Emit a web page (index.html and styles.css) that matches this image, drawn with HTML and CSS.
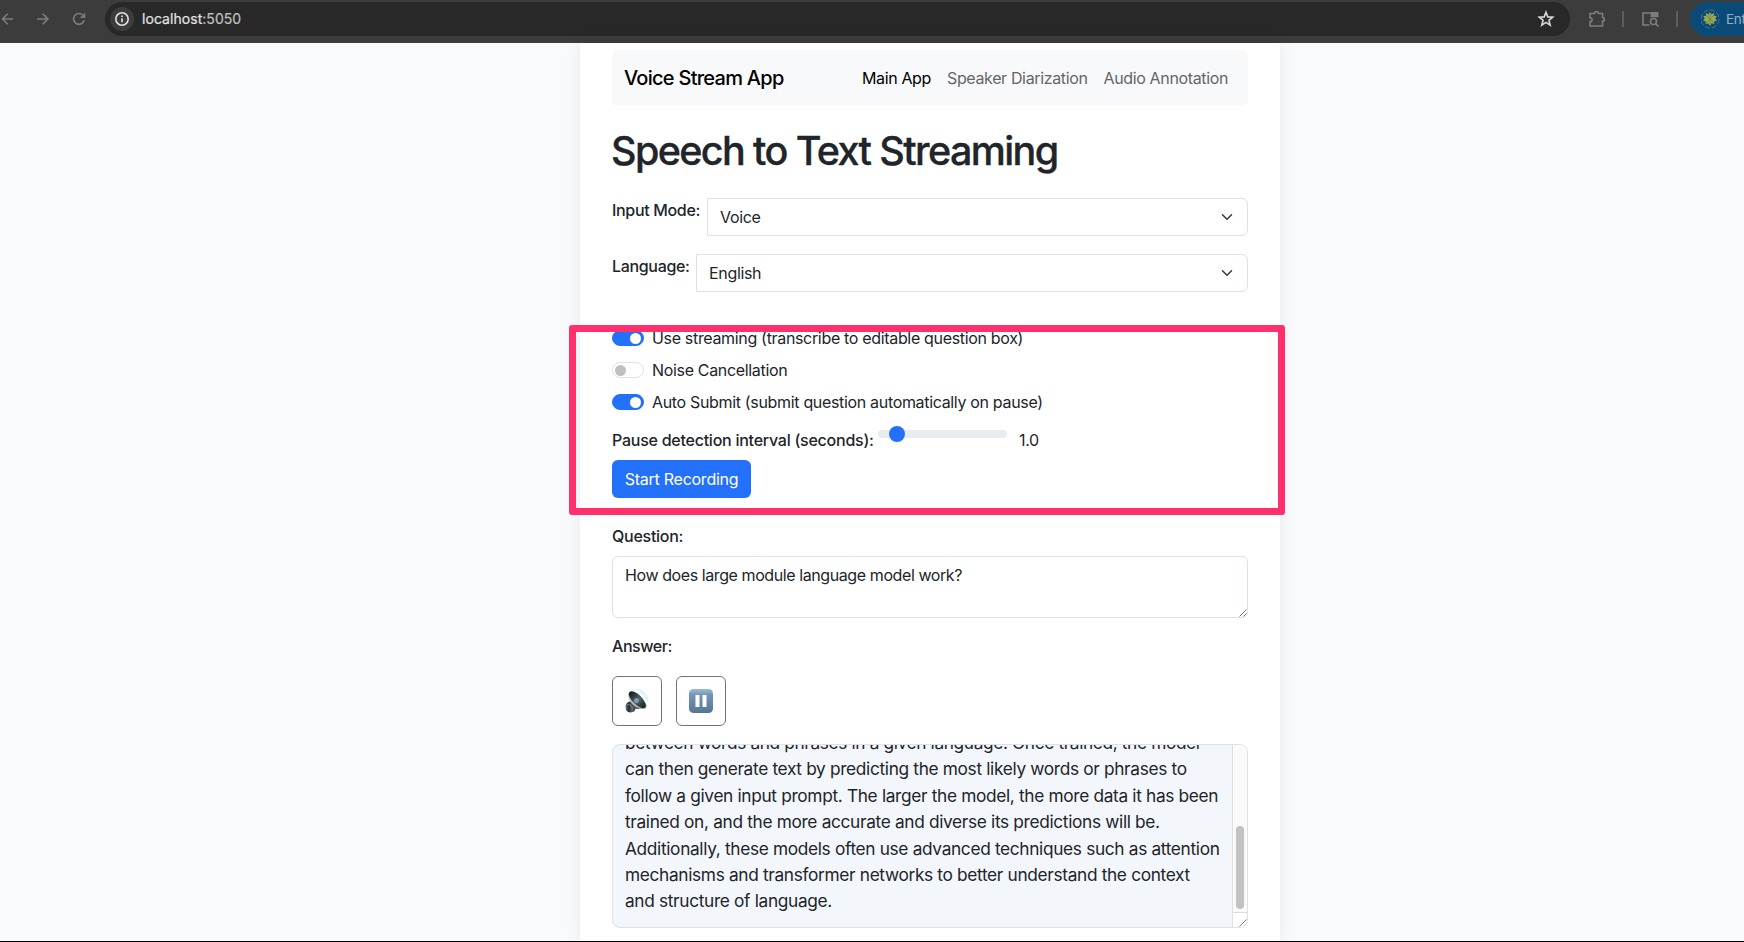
FILE: index.html
```
<!DOCTYPE html>
<html lang="en">
<head>
<meta charset="utf-8">
<title>Voice Stream App</title>
<link rel="stylesheet" href="styles.css">
</head>
<body>
<header class="toolbar">
  <div class="nav-icons">
    <svg width="16" height="16" viewBox="0 0 16 16"><path d="M13 8H2.500M7.700 2.800 2.500 8l5.200 5.200"/></svg>
    <svg width="16" height="16" viewBox="0 0 16 16"><path d="M2 8h10.800M7.700 2.800 12.900 8l-5.200 5.200"/></svg>
    <svg width="16" height="16" viewBox="0 0 16 16"><path d="M13.200 9.300A5.400 5.400 0 1 1 11.900 4.200L13.500 6M13.500 2.300V6.300H9.300"/></svg>
  </div>
  <div class="address">
    <span class="info"><svg width="16" height="16" viewBox="0 0 16 16"><circle cx="8" cy="8" r="6.200"/><path d="M8 7.200v4M8 4.500v1.500"/></svg></span>
    <span class="url">localhost<span class="port">:5050</span></span>
    <svg class="star" width="18" height="18" viewBox="0 0 18 18"><path d="m9 2.300 1.800 4.600 4.900.3-3.800 3.100 1.300 4.800L9 12.400l-4.200 2.700 1.300-4.800-3.800-3.100 4.900-.3z"/></svg>
  </div>
  <svg class="puzzle" width="18" height="18" viewBox="0 0 18 18"><path d="M2 3.500h4.500C6.500 1 10.500 1 10.500 3.500H14.500v4C17 7.500 17 11.300 14.500 11.300V16H2v-4.200c2.800 0 2.800-4 0-4z"/></svg>
  <span class="divider"></span>
  <svg class="tabsearch" width="18" height="18" viewBox="0 0 18 18"><path d="M8.500 15H2V3h14.500v4"/><path class="tab" d="M9.500 2.200h7.800v5H9.500z"/><circle cx="12.500" cy="11.500" r="3"/><path d="m14.700 13.700 2.800 2.800"/></svg>
  <span class="divider second"></span>
  <div class="profile">
    <svg width="20" height="20" viewBox="0 0 20 20"><circle class="ring" cx="10" cy="10" r="9"/><path class="leaf" d="m10 3 1.500 2.500L14 4l.2 2.700 2.500.6-1.400 2.200 1.700 2-2.600.7-.2 2.700-2.500-.7L10 17l-1.700-2.600-2.600.7-.2-2.800-2.600-.8 1.800-2L3.200 7.300l2.600-.5L6 4l2.500 1.500z"/><path class="vein" d="m6 6 8 8M14 6l-8 8M10 5v10"/></svg>
    <span>Ent</span>
  </div>
</header>
<main class="card">
  <nav class="navbar">
    <span class="brand">Voice Stream App</span>
    <div class="links"><span class="active">Main App</span><span>Speaker Diarization</span><span>Audio Annotation</span></div>
  </nav>
  <h1>Speech to Text Streaming</h1>
  <div class="field"><label class="label t-mode">Input Mode:</label><div class="select"><span>Voice</span><svg width="12" height="12" viewBox="0 0 16 16"><path d="m2 5 6 6 6-6"/></svg></div></div>
  <div class="field"><label class="label t-lang">Language:</label><div class="select"><span>English</span><svg width="12" height="12" viewBox="0 0 16 16"><path d="m2 5 6 6 6-6"/></svg></div></div>
  <section class="options">
    <div class="check"><i class="switch on"></i><span>Use streaming (transcribe to editable question box)</span></div>
    <div class="check"><i class="switch"></i><span>Noise Cancellation</span></div>
    <div class="check"><i class="switch on"></i><span>Auto Submit (submit question automatically on pause)</span></div>
    <div class="pause"><span class="label t-pause">Pause detection interval (seconds):</span><div class="range"><i></i></div><span class="value">1.0</span></div>
    <button class="record">Start Recording</button>
    <div class="highlight"></div>
  </section>
  <div class="label question-label">Question:</div>
  <div class="question">How does large module language model work?<svg class="grip" width="8" height="8" viewBox="0 0 8 8"><path d="M.5 7.500l7-7M4.500 7.500l3-3"/></svg></div>
  <div class="label answer-label">Answer:</div>
  <div class="actions">
    <button><svg width="26" height="26" viewBox="0 0 26 26">
      <defs>
        <linearGradient id="magnet"><stop stop-color="#777b7e"/><stop offset=".3" stop-color="#25282a"/><stop offset=".6" stop-color="#62676b"/><stop offset="1" stop-color="#17191a"/></linearGradient>
        <linearGradient id="cone"><stop stop-color="#111415"/><stop offset=".55" stop-color="#4d6970"/><stop offset="1" stop-color="#16191b"/></linearGradient>
      </defs>
      <path fill="url(#magnet)" d="M1.500 18c.5-4 4-5 7-4.500l4 4-2 5.500c-2.500 2.500-7.500 1.500-8.500-1z"/>
      <path fill="#b2b7ba" d="M4.500 5c-1 4 1 8 4.500 12 3 3.500 9 5 12.500 3.500 2-1 1.500-3 .5-5z"/>
      <path fill="#4e5356" d="M7 15c2 3 6 5 10 5.500l-5 .5c-3-1-5-3-5-6z"/>
      <ellipse cx="13.300" cy="11.700" rx="11" ry="4.800" transform="rotate(45 13.300 11.700)" fill="url(#cone)"/>
      <circle cx="12.500" cy="12.500" r="2.500" fill="#8399a5"/>
      <path fill="none" stroke="#b9eef3" d="M12.500 1.500c6 0 11 5 11.500 12M16 4c3 1.500 5 4 6 7"/>
      <path fill="none" stroke="#8d9295" stroke-width=".8" d="M3 17c2.500-1 5 .5 5.500 4"/>
    </svg></button>
    <button><svg width="26" height="26" viewBox="0 0 26 26"><defs><linearGradient id="pg" x2="0" y2="1"><stop stop-color="#9dbbd4"/><stop offset=".25" stop-color="#7396b5"/><stop offset="1" stop-color="#58768f"/></linearGradient></defs><rect x="1" y="1" width="24" height="24" rx="4.500" fill="url(#pg)"/><path fill="#fff" d="M7.500 7h4v12h-4zM14.500 7h4v12h-4z"/></svg></button>
  </div>
  <div class="answer">
    <div class="text">
      <p class="first">between words and phrases in a given language. Once trained, the model</p>
      <p>can then generate text by predicting the most likely words or phrases to</p>
      <p>follow a given input prompt. The larger the model, the more data it has been</p>
      <p>trained on, and the more accurate and diverse its predictions will be.</p>
      <p>Additionally, these models often use advanced techniques such as attention</p>
      <p>mechanisms and transformer networks to better understand the context</p>
      <p>and structure of language.</p>
    </div>
    <div class="scrollbar"><i></i><div class="corner"><svg width="8" height="8" viewBox="0 0 8 8"><path d="M.5 7.500l7-7M4.500 7.500l3-3"/></svg></div></div>
  </div>
</main>
<div class="edge"></div>
</body>
</html>
```
FILE: styles.css
```
* { box-sizing: border-box; }
body { margin: 0; height: 942px; overflow: hidden; position: relative; background: #f8fafc; color: #212529; font: 16px/24px Inter, "Liberation Sans", sans-serif; letter-spacing: -.33px; }
svg { display: block; flex: none; }
.toolbar { height: 43px; display: flex; align-items: flex-start; background: #3c3c3c; padding-top: 2px; overflow: hidden; }
.toolbar svg { fill: none; stroke: #7d7d7d; stroke-width: 1.6; }
.nav-icons { display: flex; gap: 20px; width: 105px; padding-top: 9px; flex: none; }
.nav-icons svg { margin-left: -.5px; }
.address { display: flex; align-items: center; width: 1465px; height: 34px; border-radius: 17px; background: #282828; padding: 0 15px 0 5px; flex: none; }
.info { display: flex; align-items: center; justify-content: center; width: 24px; height: 24px; border-radius: 50%; background: #3c3c3c; }
.toolbar .info svg { stroke: #e3e3e3; }
.url { flex: 1; margin-left: 8px; font-size: 14px; letter-spacing: .05px; color: #e3e3e3; -webkit-text-stroke: .2px; }
.port { color: #c0c0c0; }
.toolbar .star { stroke: #d8d8d8; }
.puzzle { margin: 8px 0 0 18px; }
.divider { flex: none; width: 2px; height: 16px; margin: 9px 0 0 16px; background: #5d5d5d; }
.tabsearch { margin: 8px 0 0 17px; }
.toolbar .tab { fill: #7d7d7d; stroke: none; }
.divider.second { margin-left: 17px; }
.profile { display: flex; align-items: center; flex: none; width: 80px; height: 34px; margin-left: 12px; padding-left: 10px; gap: 6px; border-radius: 17px 0 0 17px; background: #0b4a77; color: #92aec4; font-size: 13.5px; }
.toolbar .ring { stroke: #47779a; stroke-width: 1; stroke-dasharray: 5 2; }
.toolbar .leaf { fill: #98a950; stroke: none; }
.toolbar .vein { stroke: #5f7c45; stroke-width: .6; }
.card { position: relative; width: 700px; height: 899px; margin: 0 0 0 580px; padding: 7px 32px 0; background: #fff; box-shadow: 0 0 16px rgba(0,0,0,.07); }
.navbar { display: flex; align-items: center; justify-content: space-between; height: 56px; padding: 0 20px 0 12px; border-radius: 6px; background: #f8f9fa; }
.brand { font-size: 20px; font-weight: 500; letter-spacing: -.73px; color: #000; }
.links { display: flex; gap: 16px; letter-spacing: -.36px; color: #656666; }
.links .active { color: #000; }
h1 { margin: 20px 0 24px -1px; height: 48px; font-size: 39.5px; line-height: 50px; font-weight: 500; letter-spacing: -1.62px; white-space: nowrap; -webkit-text-stroke: .35px; }
.label { font-weight: 500; white-space: nowrap; }
.field { display: flex; height: 38px; margin-bottom: 18px; }
.t-mode { width: 95px; }
.t-lang { width: 84px; }
.select { flex: 1; display: flex; align-items: center; justify-content: space-between; border: 1px solid #dee2e6; border-radius: 0 6px 6px 0; padding: 0 14px 0 12px; }
.select svg { fill: none; stroke: #343a40; stroke-width: 2; stroke-linecap: round; stroke-linejoin: round; }
.options { position: relative; margin-top: 34px; height: 172px; }
.check { display: flex; align-items: center; gap: 8px; height: 24px; margin-bottom: 8px; }
.switch { width: 32px; height: 16px; border: 1px solid #dee2e6; border-radius: 8px; display: flex; align-items: center; padding: 0 2px; }
.switch::before { content: ""; width: 11px; height: 11px; border-radius: 50%; background: #bfbfbf; }
.switch.on { background: #2370fb; border-color: #2370fb; justify-content: flex-end; }
.switch.on::before { background: #fff; }
.pause { display: flex; height: 24px; padding-top: 6px; margin-bottom: 8px; }
.t-pause { width: 266px; letter-spacing: -.25px; }
.range { display: flex; align-items: center; width: 129px; height: 8px; margin-top: 2px; border-radius: 4px; background: #e9ecef; padding-left: 11px; }
.range i { width: 16px; height: 16px; border-radius: 50%; background: #2370fb; }
.value { margin-left: 12px; }
button { font: inherit; letter-spacing: inherit; padding: 0; display: flex; align-items: center; justify-content: center; }
.record { width: 139px; height: 38px; margin-top: 14px; border: 0; border-radius: 6px; background: #2370fb; color: #fff; letter-spacing: -.25px; }
.highlight { position: absolute; left: -43px; top: -1px; width: 716px; height: 190px; border: 7px solid #ff306c; border-radius: 3px; }
.question-label { margin-top: 26px; letter-spacing: -.26px; }
.question { position: relative; height: 62px; margin-top: 8px; padding: 6px 12px; border: 1px solid #dee2e6; border-radius: 6px; letter-spacing: -.41px; }
.grip { position: absolute; right: 0; bottom: 0; }
.grip, .corner svg { fill: none; stroke: #555; stroke-width: .8; }
.answer-label { margin-top: 16px; letter-spacing: -.45px; }
.actions { display: flex; gap: 14px; margin-top: 18px; }
.actions button { width: 50px; height: 50px; border: 1px solid #6c757d; border-radius: 6px; background: #fff; }
.answer { display: flex; height: 184px; margin-top: 18px; border: 1px solid #dee2e6; border-radius: 8px; background: #f3f6fb; overflow: hidden; }
.text { flex: 1; min-width: 0; padding-left: 12px; margin-top: -15px; font-size: 17.3px; line-height: 26.4px; letter-spacing: -.335px; white-space: nowrap; }
.text p { margin: 0; }
.text .first { letter-spacing: -.37px; }
.scrollbar { flex: none; width: 15px; border-left: 1px solid #e0e0e0; background: #fafafa; display: flex; flex-direction: column; justify-content: flex-end; }
.scrollbar i { width: 8px; height: 83px; margin: 0 0 3px 3px; border-radius: 4px; background: #c2c2c2; }
.corner { height: 15px; border-top: 1px solid #dcdcdc; background: #fff; display: flex; align-items: flex-end; justify-content: flex-end; }
.edge { position: absolute; left: 0; right: 0; bottom: 0; height: 1px; background: #000; }
```
